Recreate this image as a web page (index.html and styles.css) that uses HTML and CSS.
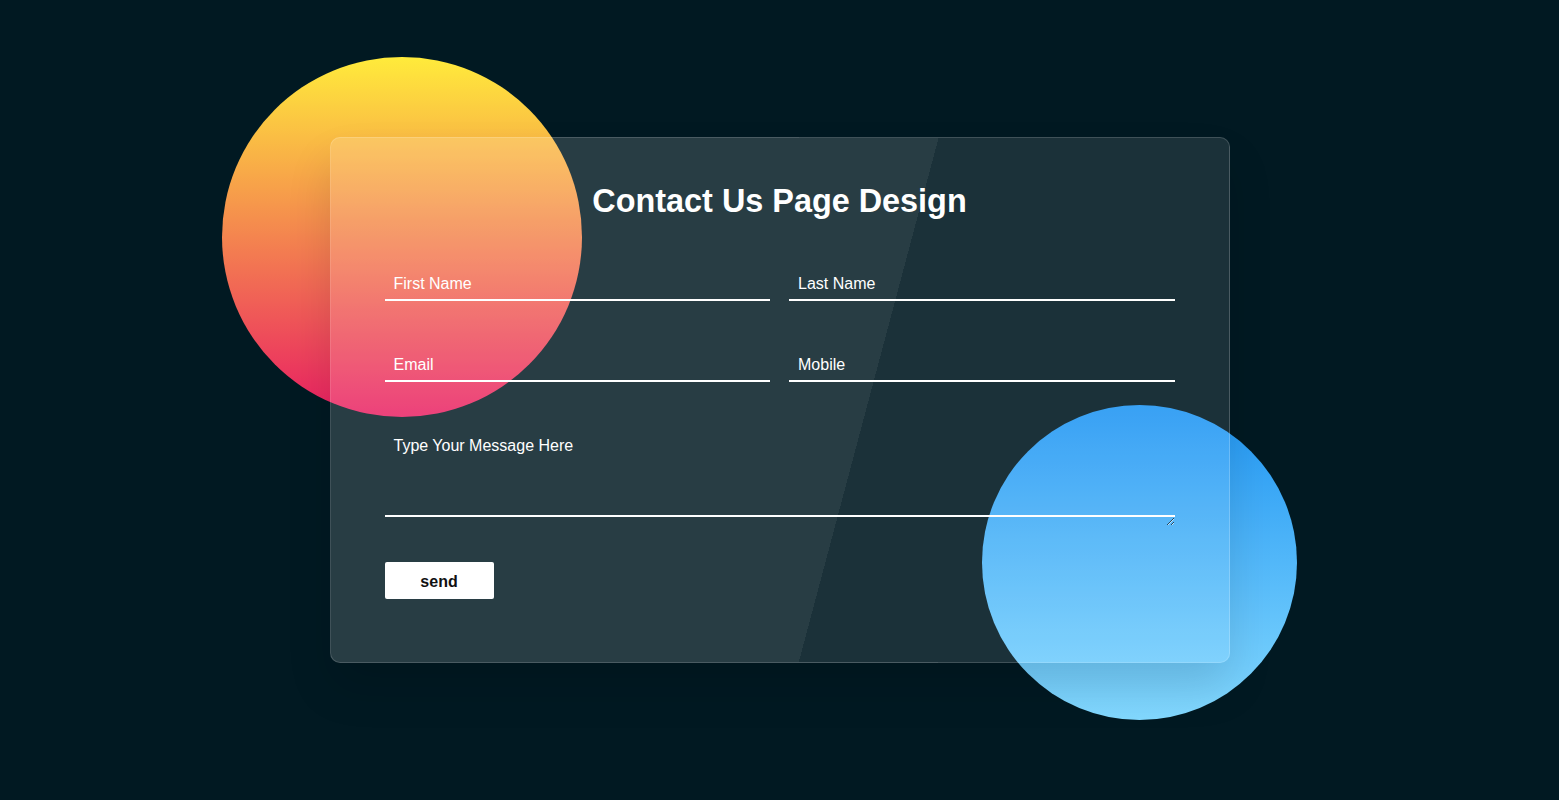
FILE: index.html
```html
<!DOCTYPE html>
<html lang="en">
<head>
<meta charset="utf-8">
<title>Contact Us Page Design</title>
<link rel="stylesheet" href="styles.css">
</head>
<body>
<div class="stage">
  <div class="shape shape-sun"></div>
  <div class="shape shape-sky"></div>
  <div class="card">
    <h2 class="title">Contact Us Page Design</h2>
    <form class="form">
      <input class="field" type="text" placeholder="First Name">
      <input class="field" type="text" placeholder="Last Name">
      <input class="field" type="email" placeholder="Email">
      <input class="field" type="text" placeholder="Mobile">
      <div class="message">
        <textarea class="message-input" placeholder="Type Your Message Here"></textarea>
      </div>
      <div class="actions">
        <button class="send" type="button">send</button>
      </div>
    </form>
  </div>
</div>
</body>
</html>
```
FILE: styles.css
```css
* {
  box-sizing: border-box;
}

html, body {
  margin: 0;
  padding: 0;
}

body {
  min-height: 100vh;
  background: #011922;
  display: flex;
  align-items: center;
  justify-content: center;
  font-family: "Liberation Sans", Arial, sans-serif;
  overflow: hidden;
}

.stage {
  position: relative;
  width: 900px;
}

.shape {
  position: absolute;
  border-radius: 50%;
}

.shape-sun {
  width: 360px;
  height: 360px;
  left: -108px;
  top: -80px;
  background: linear-gradient(#ffeb3b, #e91e63);
}

.shape-sky {
  width: 315px;
  height: 315px;
  left: 652px;
  top: 268px;
  background: linear-gradient(#2196f3, #83d9ff);
}

.card {
  position: relative;
  z-index: 1;
  width: 900px;
  padding: 44px 54px 63px;
  border: 1px solid rgba(255, 255, 255, 0.16);
  border-radius: 10px;
  background: linear-gradient(104.93deg, rgba(255, 255, 255, 0.155) 587px, rgba(255, 255, 255, 0.105) 587px);
  box-shadow: 0 25px 45px rgba(0, 0, 0, 0.12);
}

.title {
  margin: 0 0 46px;
  text-align: center;
  color: #fff;
  font-size: 32.4px;
  font-weight: 700;
  line-height: 38px;
}

.form {
  display: grid;
  grid-template-columns: 1fr 1fr;
  column-gap: 19px;
  row-gap: 45.5px;
}

.field {
  display: block;
  width: 100%;
  margin: 0;
  padding: 9px 8px 6px 9px;
  border: none;
  border-bottom: 2px solid #fff;
  border-radius: 0;
  background: transparent;
  color: #fff;
  font-family: "Liberation Sans", Arial, sans-serif;
  font-size: 16px;
  outline: none;
}

.field::placeholder,
.message-input::placeholder {
  color: #fff;
  opacity: 1;
}

.message {
  grid-column: 1 / span 2;
  border-bottom: 2px solid #fff;
}

.message-input {
  display: block;
  width: 100%;
  height: 98.5px;
  margin: 0 0 -11px;
  padding: 10px 8px 5px 9px;
  border: none;
  background: transparent;
  color: #fff;
  font-family: "Liberation Sans", Arial, sans-serif;
  font-size: 16px;
  outline: none;
}

.actions {
  grid-column: 1 / span 2;
  display: flex;
}

.send {
  width: 109px;
  height: 37px;
  padding: 2px 0 0;
  border: none;
  border-radius: 2px;
  background: #fff;
  color: #111;
  font-family: "Liberation Sans", Arial, sans-serif;
  font-size: 16px;
  font-weight: 700;
  cursor: pointer;
}
```
